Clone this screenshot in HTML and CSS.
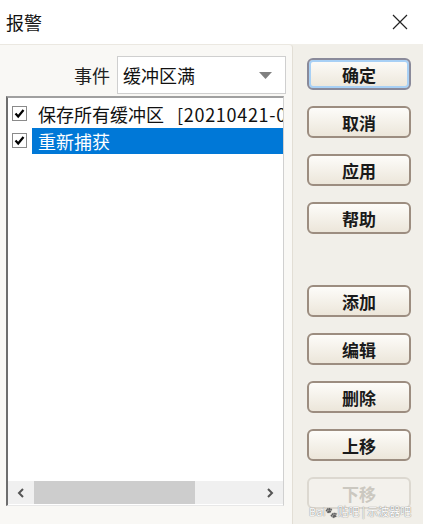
FILE: index.html
```html
<!DOCTYPE html>
<html lang="zh-CN">
<head>
    <meta charset="UTF-8">
    <title>报警</title>
    <link rel="stylesheet" href="styles.css">
</head>
<body>
    <div class="dialog">
        <div class="titlebar">
            <span class="title">报警</span>
            <svg class="close" width="16" height="16" viewBox="0 0 16 16">
                <path d="M1 1 L15 15 M15 1 L1 15" stroke="#222" stroke-width="1.2" fill="none"/>
            </svg>
        </div>
        <div class="main">
            <div class="panel">
                <div class="field">
                    <span class="label">事件</span>
                    <div class="combo">
                        <span>缓冲区满</span>
                        <svg width="13" height="7" viewBox="0 0 13 7"><path d="M0 0 L13 0 L6.5 7 Z" fill="#808080"/></svg>
                    </div>
                </div>
                <div class="listbox">
                    <div class="items">
                        <div class="item">
                            <span class="check"><svg width="11" height="11" viewBox="0 0 11 11"><path d="M1.5 5.5 L4.2 8.5 L9.5 2" stroke="#000" stroke-width="2.2" fill="none"/></svg></span>
                            <span class="text">保存所有缓冲区<span class="stamp">[20210421-0</span></span>
                        </div>
                        <div class="item">
                            <span class="check"><svg width="11" height="11" viewBox="0 0 11 11"><path d="M1.5 5.5 L4.2 8.5 L9.5 2" stroke="#000" stroke-width="2.2" fill="none"/></svg></span>
                            <span class="text selected">重新捕获</span>
                        </div>
                    </div>
                    <div class="hscroll">
                        <svg class="arrow" width="10" height="10" viewBox="0 0 10 10"><path d="M7 1 L3 5 L7 9" stroke="#555" stroke-width="2" fill="none"/></svg>
                        <div class="track"><div class="thumb"></div></div>
                        <svg class="arrow" width="10" height="10" viewBox="0 0 10 10"><path d="M3 1 L7 5 L3 9" stroke="#555" stroke-width="2" fill="none"/></svg>
                    </div>
                </div>
            </div>
            <div class="sidebar">
                <button class="btn default">确定</button>
                <button class="btn">取消</button>
                <button class="btn">应用</button>
                <button class="btn">帮助</button>
                <div class="spacer"></div>
                <button class="btn">添加</button>
                <button class="btn">编辑</button>
                <button class="btn">删除</button>
                <button class="btn">上移</button>
                <button class="btn disabled">下移</button>
                <div class="watermark">Bai<span class="paw">&#x1F43E;</span>贴吧 | 示波器吧</div>
            </div>
        </div>
    </div>
</body>
</html>
```

FILE: styles.css
```css
body {
    margin: 0;
    font-family: "Noto Sans CJK SC", "Liberation Sans", sans-serif;
    background-color: #f1efe9;
}

.dialog {
    width: 423px;
    height: 524px;
    overflow: hidden;
}

.titlebar {
    height: 44px;
    background-color: #ffffff;
    display: flex;
    justify-content: space-between;
    align-items: center;
    padding: 0 15px 0 6px;
}

.title {
    font-size: 18px;
    color: #111;
}

.main {
    display: flex;
    height: 480px;
}

.panel {
    width: 292px;
    background-color: #f9f8f5;
    border-right: 1px solid #e2ded5;
    border-top: 1px solid #ebe8e1;
    border-radius: 0 4px 0 0;
}

.field {
    display: flex;
    align-items: center;
    justify-content: flex-end;
    margin: 11px 6px 0 0;
}

.label {
    font-size: 18px;
    color: #222;
    margin-right: 7px;
}

.combo {
    border: 1px solid #cfcfcf;
    background-color: #ffffff;
    display: flex;
    align-items: center;
    justify-content: space-between;
    padding: 0 13px 0 5px;
    box-sizing: border-box;
    width: 169px;
    height: 38px;
    font-size: 18px;
    color: #111;
}

.listbox {
    margin: 2px 0 0 6px;
    width: 278px;
    height: 410px;
    box-sizing: border-box;
    border-top: 2px solid #a0a0a0;
    border-left: 2px solid #6e6e6e;
    border-right: 1px solid #d0d0d0;
    border-bottom: 1px solid #e8e8e8;
    background-color: #ffffff;
    display: flex;
    flex-direction: column;
}

.items {
    flex: 1;
    padding-top: 2px;
}

.item {
    display: flex;
    align-items: center;
    height: 27px;
    white-space: nowrap;
    overflow: hidden;
}

.check {
    width: 13px;
    height: 13px;
    border: 1px solid #8a8a8a;
    margin: 0 11px 0 4px;
    display: flex;
    align-items: center;
    justify-content: center;
    flex-shrink: 0;
    background-color: #ffffff;
}

.text {
    font-size: 18px;
    color: #111;
    line-height: 26px;
}

.stamp {
    margin-left: 13px;
    letter-spacing: 0.7px;
}

.text.selected {
    flex: 1;
    background-color: #0078d7;
    color: #ffffff;
    margin-left: -6px;
    padding-left: 6px;
}

.hscroll {
    height: 23px;
    background-color: #f0f0f0;
    display: flex;
    align-items: center;
    margin-bottom: 1px;
}

.arrow {
    margin: 0 8px;
    flex-shrink: 0;
}

.track {
    flex: 1;
    height: 23px;
}

.thumb {
    width: 161px;
    height: 23px;
    background-color: #cdcdcd;
}

.sidebar {
    flex: 1;
    display: flex;
    flex-direction: column;
    align-items: flex-start;
    padding: 14px 0 0 14px;
    gap: 16px;
    position: relative;
}

.btn {
    width: 104px;
    height: 32px;
    border: 2px solid #9c8d80;
    border-radius: 6px;
    background: linear-gradient(#fdfcf9, #ece6da);
    font-family: "Noto Sans CJK SC", sans-serif;
    font-size: 17px;
    font-weight: bold;
    color: #1a1a1a;
    flex-shrink: 0;
    padding: 0;
}

.btn.default {
    box-shadow: inset 0 0 0 2px #a8d0f5;
    border-color: #8a8a9a;
}

.btn.disabled {
    color: #cbc8c0;
    border-color: #dcd8d0;
    background: #f3f1ec;
}

.spacer {
    height: 19px;
    flex-shrink: 0;
}

.watermark {
    position: absolute;
    left: 16px;
    bottom: 5px;
    font-size: 11px;
    color: #ffffff;
    text-shadow: 0 0 1px #888, 0 0 1px #888;
    white-space: nowrap;
}

.paw {
    font-size: 10px;
    filter: grayscale(1);
}
```
